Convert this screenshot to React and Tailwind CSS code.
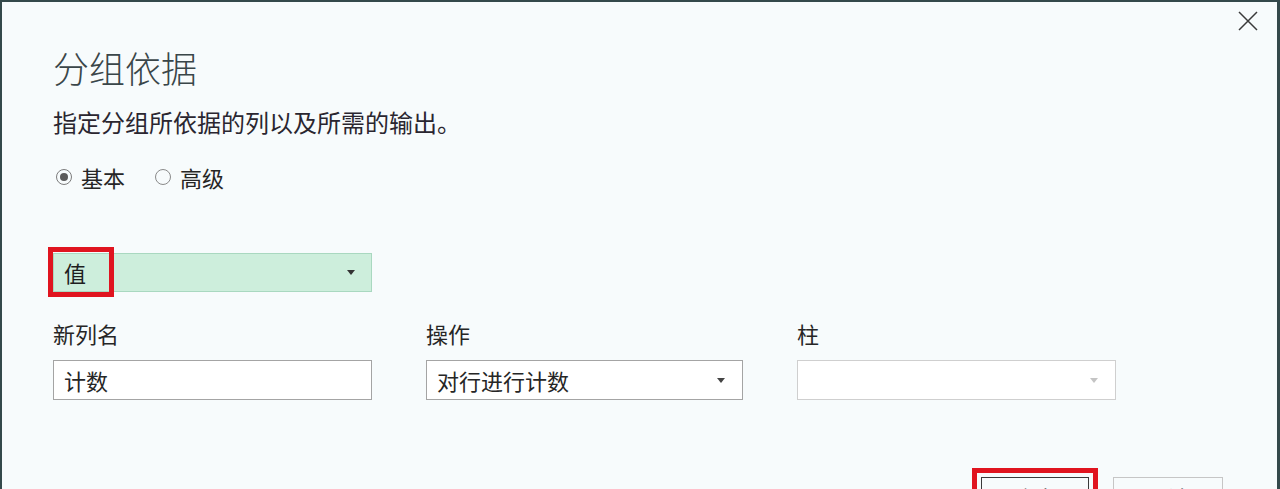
export default function App() {
  const Caret = ({ color }) => (
    <svg width="8" height="5" viewBox="0 0 8 5" className="shrink-0">
      <path d="M0 0 L8 0 L4 5 Z" fill={color} />
    </svg>
  );
  return (
    <div className="w-[1280px] h-[489px] overflow-hidden bg-[#f7fbfc] font-['Noto_Sans_CJK_SC',sans-serif]">
      <div className="relative h-[540px] border-l-2 border-t-2 border-r-[3px] border-[#34494b] pl-[51px] pr-[54px] pt-[47px] text-[#262626]">
        <button className="absolute top-[8px] right-[18px] w-[22px] h-[22px] flex items-center justify-center">
          <svg width="20" height="20" viewBox="0 0 20 20">
            <path d="M1 1 L19 19 M19 1 L1 19" stroke="#3a3a3a" strokeWidth="1.5" fill="none" />
          </svg>
        </button>

        <h1 className="text-[36px] leading-[36px] font-light text-[#3a4649]">分组依据</h1>
        <p className="mt-[25px] text-[24px] leading-[24px] text-[#2a2630]">指定分组所依据的列以及所需的输出。</p>

        <div className="mt-[32px] h-[22px] flex items-center text-[22px] leading-[22px]">
          <span className="ml-[3px] w-4 h-4 rounded-full border border-[#7c7c7c] flex items-center justify-center">
            <span className="w-[8px] h-[8px] rounded-full bg-[#5a5a5a]" />
          </span>
          <span className="ml-[9px]">基本</span>
          <span className="ml-[30px] w-4 h-4 rounded-full border border-[#8a8a8a]" />
          <span className="ml-[9px]">高级</span>
        </div>

        <div className="relative mt-[65px] w-[319px] h-[39px] bg-[#cdeedc] border border-[#a9d8c0] flex items-center justify-between pl-[10px] pr-[16px] text-[22px]">
          <span className="text-[#1e1e1e]">值</span>
          <Caret color="#333" />
          <div className="absolute -left-[6px] -top-[7px] w-[66px] h-[50px] border-[5px] border-[#e0141f]" />
        </div>

        <div className="mt-[30px] grid grid-cols-[319px_317px_319px] gap-x-[54px] text-[22px]">
          <div className="h-[22px] leading-[22px]">新列名</div>
          <div className="h-[22px] leading-[22px]">操作</div>
          <div className="h-[22px] leading-[22px]">柱</div>

          <div className="mt-[16px] h-[40px] bg-white border border-[#a4a4a4] flex items-center pl-[10px]">计数</div>
          <div className="mt-[16px] h-[40px] bg-white border border-[#a4a4a4] flex items-center justify-between pl-[10px] pr-[17px]">
            <span>对行进行计数</span>
            <Caret color="#444" />
          </div>
          <div className="mt-[16px] h-[40px] bg-white border border-[#cfcfcf] flex items-center justify-end pr-[17px]">
            <Caret color="#c4c4c4" />
          </div>
        </div>

        <div className="mt-[68px] flex justify-end items-start text-[22px]">
          <div className="border-[5px] border-[#e0141f] p-[4px]">
            <button className="w-[108px] h-[40px] border border-[#3a3a3a] bg-[#f7fbfc] flex items-center justify-center">确定</button>
          </div>
          <button className="ml-[15px] mt-[9px] w-[110px] h-[40px] border border-[#c6c6c6] bg-[#f7fbfc] flex items-center justify-center">取消</button>
        </div>
      </div>
    </div>
  );
}
